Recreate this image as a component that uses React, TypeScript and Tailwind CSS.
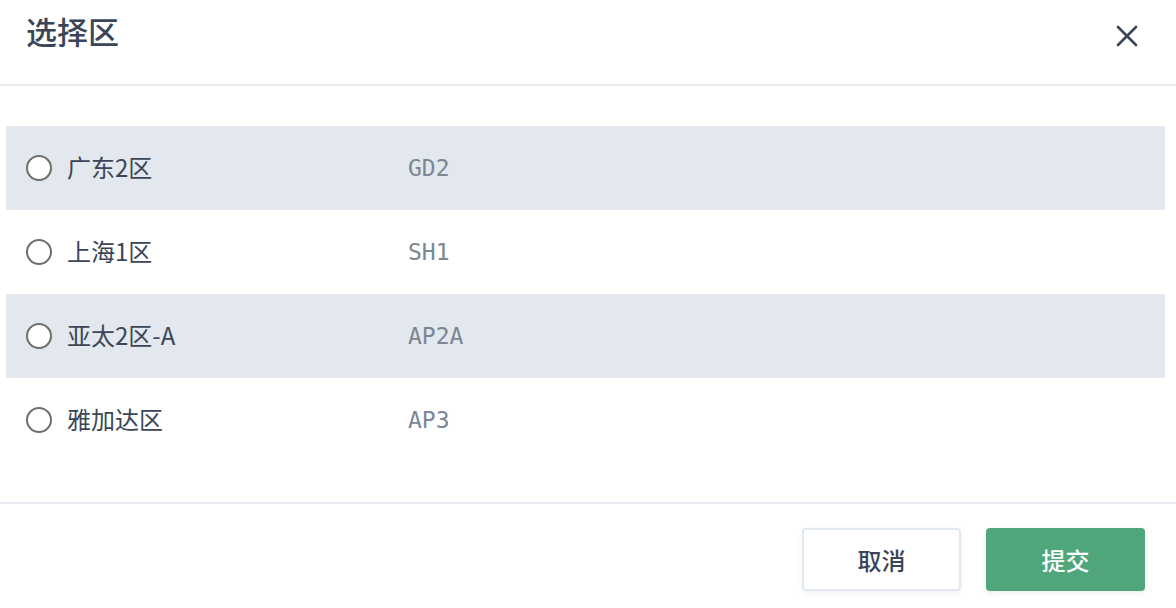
import React, { useState } from "react";

const regions = [
  { name: "广东2区", code: "GD2" },
  { name: "上海1区", code: "SH1" },
  { name: "亚太2区-A", code: "AP2A" },
  { name: "雅加达区", code: "AP3" },
];

const cjk = { fontFamily: '"Noto Sans CJK SC", "Noto Sans", sans-serif' };
const mono = { fontFamily: '"DejaVu Sans Mono", "Liberation Mono", monospace' };

export default function App() {
  const [selected, setSelected] = useState<string | null>(null);

  return (
    <div className="h-[608px] w-[1176px] overflow-hidden bg-white" style={cjk}>
      <div className="flex h-[86px] items-start justify-between border-b-2 border-[#e6ebf1] pl-[26px] pr-[38px] pt-[10px]">
        <h2 className="text-[31px] font-medium leading-[42px] text-[#3a4658]">选择区</h2>
        <button type="button" className="mt-[15px] text-[#3a4658]" aria-label="close">
          <svg width="22" height="22" viewBox="0 0 22 22" fill="none" stroke="currentColor" strokeWidth="2.6" strokeLinecap="round">
            <path d="M2 2L20 20M20 2L2 20" />
          </svg>
        </button>
      </div>

      <div className="ml-[6px] mr-[11px] pb-[40px] pt-[40px]">
        {regions.map((r, i) => (
          <label
            key={r.code}
            className={`flex h-[84px] cursor-pointer items-center ${i % 2 === 0 ? "bg-[#e3e8ee]" : "bg-white"}`}
          >
            <span className="ml-[20px] flex h-[26px] w-[26px] items-center justify-center rounded-full border-2 border-[#6e6e6e] bg-white">
              {selected === r.code && <span className="h-[12px] w-[12px] rounded-full bg-[#4ea67a]" />}
            </span>
            <input type="radio" name="region" className="hidden" checked={selected === r.code} onChange={() => setSelected(r.code)} />
            <span className="ml-[15px] mb-[3px] w-[341px] text-[24px] text-[#3a4658]">{r.name}</span>
            <span className="text-[23px] text-[#7b8794]" style={mono}>{r.code}</span>
          </label>
        ))}
      </div>

      <div className="flex justify-end gap-[25px] border-t-2 border-[#e6ebf1] pr-[31px] pt-[24px]">
        <button type="button" className="h-[63px] w-[159px] rounded-[4px] border-2 border-[#e2e8f0] bg-white text-[24px] font-medium text-[#3a4658] shadow-[0_2px_6px_rgba(0,0,0,0.06)]">
          取消
        </button>
        <button type="button" className="h-[63px] w-[159px] rounded-[4px] bg-[#4ea67a] text-[24px] font-medium text-white shadow-[0_2px_6px_rgba(0,0,0,0.08)]">
          提交
        </button>
      </div>
    </div>
  );
}
